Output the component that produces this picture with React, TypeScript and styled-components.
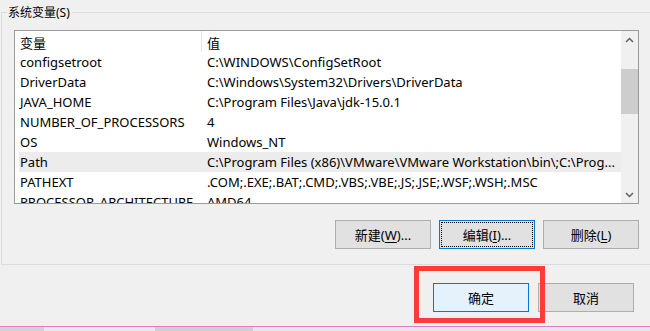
import React from 'react';
import styled, { createGlobalStyle } from 'styled-components';

const GlobalStyle = createGlobalStyle`
  html, body { margin: 0; padding: 0; background: #f0f0f0; }
  body { font-family: "Noto Sans", "Noto Sans CJK SC", sans-serif; }
`;

const UI_FONT = `"Noto Sans", "Noto Sans CJK SC", sans-serif`;

const Dialog = styled.div`
  position: relative;
  width: 650px;
  height: 331px;
  overflow: hidden;
  background: #f0f0f0;
  display: flex;
  flex-direction: column;
  font-family: ${UI_FONT};
  font-size: 13px;
  color: #000;
`;

const GroupBox = styled.fieldset`
  margin: 4px 0 0 1px;
  padding: 9px 0 15px 12px;
  width: 680px;
  box-sizing: border-box;
  border: 1px solid #dcdcdc;
  display: flex;
  flex-direction: column;
  gap: 16px;
  min-inline-size: 0;
`;

const GroupLabel = styled.legend`
  margin-left: -7px;
  padding: 0 2px 0 1px;
  font-size: 12px;
  line-height: 17px;
  color: #000;
`;

const ListBox = styled.div`
  width: 625px;
  height: 174px;
  box-sizing: border-box;
  border: 1px solid #9b9b9b;
  background: #fff;
  display: flex;
  overflow: hidden;
`;

const Table = styled.div`
  flex: 1;
  min-width: 0;
  overflow: hidden;
  display: flex;
  flex-direction: column;
`;

const HeaderRow = styled.div`
  display: flex;
  height: 21px;
  flex-shrink: 0;
  align-items: center;
`;

const HeaderCell = styled.div<{ $w?: number }>`
  ${(p) => (p.$w ? `width: ${p.$w}px; border-right: 1px solid #e5e5e5;` : 'flex: 1;')}
  box-sizing: border-box;
  height: 100%;
  padding-left: 5px;
  display: flex;
  align-items: center;
  padding-top: 1px;
`;

const Row = styled.div<{ $selected?: boolean }>`
  display: flex;
  height: 20px;
  flex-shrink: 0;
  margin-left: 4px;
  align-items: center;
  background: ${(p) => (p.$selected ? '#ececec' : 'transparent')};
`;

const NameCell = styled.div`
  width: 183px;
  padding-left: 1px;
  box-sizing: border-box;
  white-space: nowrap;
  overflow: hidden;
`;

const ValueCell = styled.div`
  flex: 1;
  min-width: 0;
  padding-left: 5px;
  white-space: nowrap;
  overflow: hidden;
`;

const ScrollBar = styled.div`
  width: 17px;
  flex-shrink: 0;
  background: #f0f0f0;
  display: flex;
  flex-direction: column;
`;

const ScrollArrow = styled.div`
  height: 17px;
  display: flex;
  align-items: center;
  justify-content: center;
  color: #606060;
`;

const ScrollTrack = styled.div`
  flex: 1;
  display: flex;
  flex-direction: column;
`;

const ScrollThumb = styled.div<{ $top: number; $size: number }>`
  margin-top: ${(p) => p.$top}px;
  height: ${(p) => p.$size}px;
  background: #cdcdcd;
`;

const ButtonRow = styled.div<{ $pad?: number; $gap?: number }>`
  display: flex;
  justify-content: flex-end;
  gap: ${(p) => p.$gap ?? 9}px;
  padding-right: ${(p) => p.$pad ?? 0}px;
`;

const Button = styled.button<{ $focused?: boolean; $primary?: boolean }>`
  width: 96px;
  height: 29px;
  box-sizing: border-box;
  margin: 0;
  padding: 0 0 1px;
  font-family: ${UI_FONT};
  font-size: 13px;
  color: #000;
  background: ${(p) => (p.$primary ? '#e5f1fb' : '#e1e1e1')};
  border: 1px solid ${(p) => (p.$primary || p.$focused ? '#0078d7' : '#adadad')};
  outline: ${(p) => (p.$focused ? '1px dotted #000' : 'none')};
  outline-offset: -3px;
  cursor: default;

  u { text-underline-offset: 2px; }
`;

const Footer = styled.div`
  height: 61px;
  box-sizing: border-box;
  padding-top: 18px;
  flex-shrink: 0;
`;

const TaskStrip = styled.div`
  flex: 1;
  border-top: 1px solid #e07ac4;
  background: linear-gradient(90deg, #d2d2d2 0 44px, #e8e8e8 44px 155px, #cfcfcf 155px 253px, #e6e6e6 253px);
`;

const Annotation = styled.div`
  position: absolute;
  left: 414px;
  top: 266px;
  width: 131px;
  height: 57px;
  box-sizing: border-box;
  border: 5px solid #fd3b3b;
  pointer-events: none;
`;

const Chevron = ({ up }: { up?: boolean }) => (
  <svg width="9" height="6" viewBox="0 0 9 6">
    <path
      d={up ? 'M1 5 L4.5 1.5 L8 5' : 'M1 1 L4.5 4.5 L8 1'}
      fill="none"
      stroke="currentColor"
      strokeWidth="1.5"
    />
  </svg>
);

const vars: [string, string][] = [
  ['configsetroot', 'C:\\WINDOWS\\ConfigSetRoot'],
  ['DriverData', 'C:\\Windows\\System32\\Drivers\\DriverData'],
  ['JAVA_HOME', 'C:\\Program Files\\Java\\jdk-15.0.1'],
  ['NUMBER_OF_PROCESSORS', '4'],
  ['OS', 'Windows_NT'],
  ['Path', 'C:\\Program Files (x86)\\VMware\\VMware Workstation\\bin\\;C:\\Prog...'],
  ['PATHEXT', '.COM;.EXE;.BAT;.CMD;.VBS;.VBE;.JS;.JSE;.WSF;.WSH;.MSC'],
  ['PROCESSOR_ARCHITECTURE', 'AMD64'],
];

export default function App() {
  return (
    <>
      <GlobalStyle />
      <Dialog>
        <GroupBox>
          <GroupLabel>系统变量(S)</GroupLabel>
          <ListBox>
            <Table>
              <HeaderRow>
                <HeaderCell $w={187}>变量</HeaderCell>
                <HeaderCell>值</HeaderCell>
              </HeaderRow>
              {vars.map(([name, value]) => (
                <Row key={name} $selected={name === 'Path'}>
                  <NameCell>{name}</NameCell>
                  <ValueCell>{value}</ValueCell>
                </Row>
              ))}
            </Table>
            <ScrollBar>
              <ScrollArrow><Chevron up /></ScrollArrow>
              <ScrollTrack>
                <ScrollThumb $top={21} $size={45} />
              </ScrollTrack>
              <ScrollArrow><Chevron /></ScrollArrow>
            </ScrollBar>
          </ListBox>
          <ButtonRow $pad={41} $gap={8}>
            <Button>新建(<u>W</u>)...</Button>
            <Button $focused>编辑(<u>I</u>)...</Button>
            <Button>删除(<u>L</u>)</Button>
          </ButtonRow>
        </GroupBox>
        <Footer>
          <ButtonRow $pad={16}>
            <Button $primary>确定</Button>
            <Button>取消</Button>
          </ButtonRow>
        </Footer>
        <TaskStrip />
        <Annotation />
      </Dialog>
    </>
  );
}
